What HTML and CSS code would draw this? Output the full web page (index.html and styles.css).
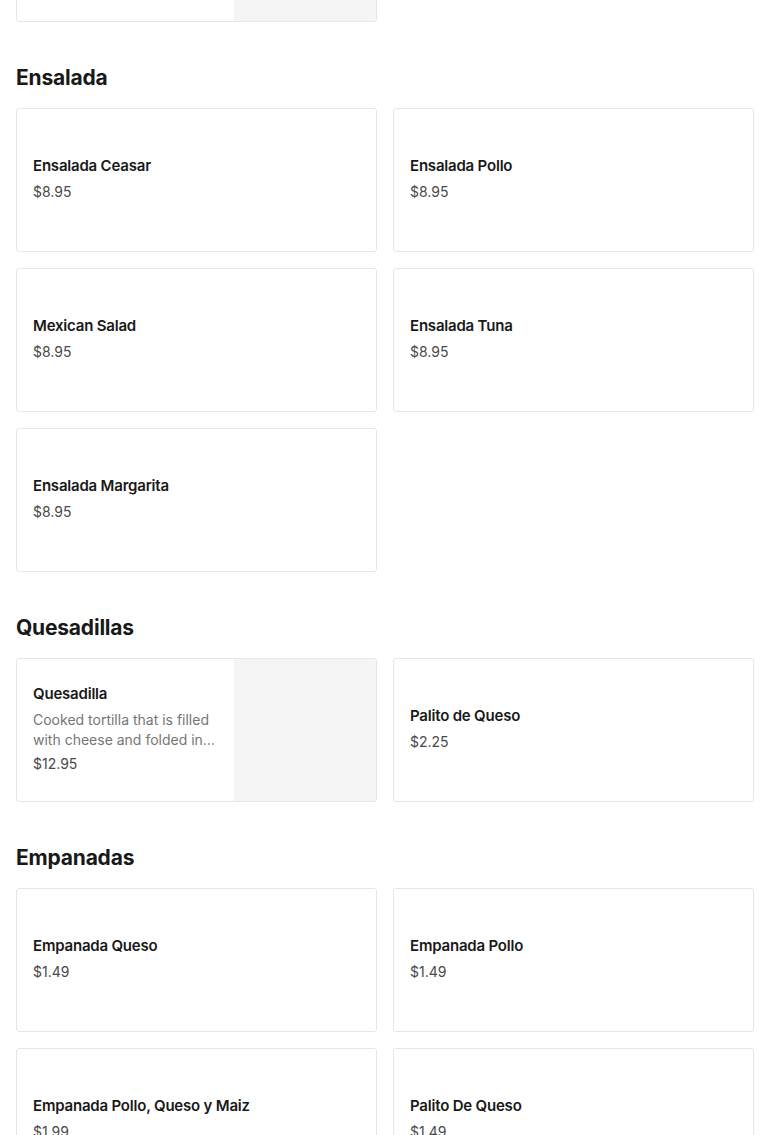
FILE: index.html
```html
<!DOCTYPE html>
<html lang="es">
<head>
<meta charset="utf-8">
<title>Menu</title>
<link rel="stylesheet" href="styles.css">
</head>
<body>
<main class="menu">
  <section class="section section-prev">
    <div class="grid">
      <div class="card has-img">
        <div class="card-body">
          <div class="title">Tacos</div>
          <div class="price">$3.50</div>
        </div>
        <div class="card-img"></div>
      </div>
    </div>
  </section>

  <section class="section">
    <h2 class="heading">Ensalada</h2>
    <div class="grid">
      <div class="card"><div class="card-body"><div class="title">Ensalada Ceasar</div><div class="price">$8.95</div></div></div>
      <div class="card"><div class="card-body"><div class="title">Ensalada Pollo</div><div class="price">$8.95</div></div></div>
      <div class="card"><div class="card-body"><div class="title">Mexican Salad</div><div class="price">$8.95</div></div></div>
      <div class="card"><div class="card-body"><div class="title">Ensalada Tuna</div><div class="price">$8.95</div></div></div>
      <div class="card"><div class="card-body"><div class="title">Ensalada Margarita</div><div class="price">$8.95</div></div></div>
    </div>
  </section>

  <section class="section">
    <h2 class="heading">Quesadillas</h2>
    <div class="grid">
      <div class="card has-img">
        <div class="card-body">
          <div class="title">Quesadilla</div>
          <div class="desc">Cooked tortilla that is filled with cheese and folded in half and grilled</div>
          <div class="price">$12.95</div>
        </div>
        <div class="card-img"></div>
      </div>
      <div class="card"><div class="card-body"><div class="title">Palito de Queso</div><div class="price">$2.25</div></div></div>
    </div>
  </section>

  <section class="section">
    <h2 class="heading">Empanadas</h2>
    <div class="grid">
      <div class="card"><div class="card-body"><div class="title">Empanada Queso</div><div class="price">$1.49</div></div></div>
      <div class="card"><div class="card-body"><div class="title">Empanada Pollo</div><div class="price">$1.49</div></div></div>
      <div class="card"><div class="card-body"><div class="title">Empanada Pollo, Queso y Maiz</div><div class="price">$1.99</div></div></div>
      <div class="card"><div class="card-body"><div class="title">Palito De Queso</div><div class="price">$1.49</div></div></div>
    </div>
  </section>
</main>
</body>
</html>
```

FILE: styles.css
```css
* { box-sizing: border-box; }
html, body { margin: 0; padding: 0; background: #fff; }
body {
  font-family: Inter, "Noto Sans", "Liberation Sans", sans-serif;
  color: #191919;
  overflow: hidden;
}
.menu { padding: 0 16px; }
.section-prev { margin-top: -122px; }
.heading {
  margin: 42px 0 16px;
  font-size: 21px;
  line-height: 28px;
  font-weight: 700;
  letter-spacing: -0.2px;
  color: #191919;
}
.grid {
  display: grid;
  grid-template-columns: 1fr 1fr;
  gap: 16px;
}
.card {
  display: flex;
  height: 144px;
  border: 1px solid #e6e6e6;
  border-radius: 3px;
  overflow: hidden;
  background: #fff;
}
.card-body {
  flex: 1;
  min-width: 0;
  display: flex;
  flex-direction: column;
  justify-content: center;
  padding: 0 16px 3px;
}
.card-img {
  width: 142px;
  flex: none;
  background: #f5f5f5;
}
.title {
  font-size: 15px;
  line-height: 22px;
  font-weight: 600;
  color: #191919;
  letter-spacing: -0.2px;
  margin-bottom: 5px;
}
.desc {
  font-size: 14px;
  line-height: 20px;
  color: #767676;
  margin-bottom: 4px;
  display: -webkit-box;
  -webkit-line-clamp: 2;
  -webkit-box-orient: vertical;
  overflow: hidden;
}
.price {
  font-size: 14px;
  line-height: 20px;
  color: #494949;
}
```
